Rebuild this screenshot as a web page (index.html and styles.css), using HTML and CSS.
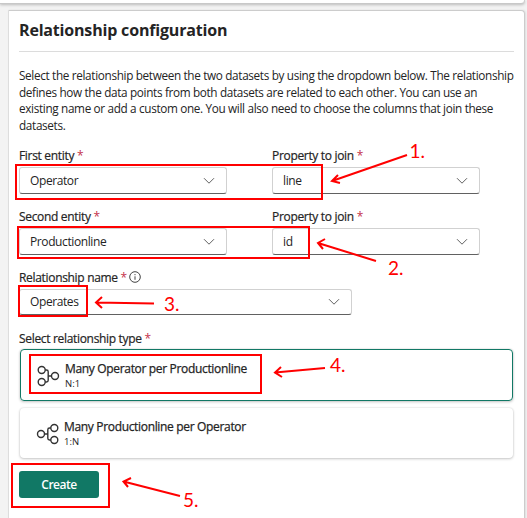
FILE: index.html
```html
<!DOCTYPE html>
<html lang="en">
<head>
<meta charset="utf-8">
<title>Relationship configuration</title>
<link rel="stylesheet" href="styles.css">
</head>
<body>
<div class="previous-panel"></div>
<main class="panel">
  <h1>Relationship configuration</h1>
  <p class="description">
    <span>Select the relationship between the two datasets by using the dropdown below. The relationship</span>
    <span>defines how the data points from both datasets are related to each other. You can use an</span>
    <span>existing name or add a custom one. You will also need to choose the columns that join these</span>
    <span>datasets.</span>
  </p>
  <div class="row">
    <div class="field">
      <div class="label">First entity <i>*</i></div>
      <div class="select"><span>Operator</span><svg class="chevron" viewBox="0 0 12 8"><path d="M1 1.2 6 6.2 11 1.2"/></svg></div>
    </div>
    <div class="field">
      <div class="label">Property to join <i>*</i></div>
      <div class="select"><span>line</span><svg class="chevron" viewBox="0 0 12 8"><path d="M1 1.2 6 6.2 11 1.2"/></svg></div>
    </div>
  </div>
  <div class="row">
    <div class="field">
      <div class="label">Second entity <i>*</i></div>
      <div class="select"><span>Productionline</span><svg class="chevron" viewBox="0 0 12 8"><path d="M1 1.2 6 6.2 11 1.2"/></svg></div>
    </div>
    <div class="field">
      <div class="label">Property to join <i>*</i></div>
      <div class="select"><span>id</span><svg class="chevron" viewBox="0 0 12 8"><path d="M1 1.2 6 6.2 11 1.2"/></svg></div>
    </div>
  </div>
  <div class="field name-field">
    <div class="label">Relationship name <i>*</i><svg class="info" viewBox="0 0 12 12"><circle cx="6" cy="6" r="5.3"/><path d="M6 5.3V8.8M6 3.1V4.2"/></svg></div>
    <div class="select"><span>Operates</span><svg class="chevron" viewBox="0 0 12 8"><path d="M1 1.2 6 6.2 11 1.2"/></svg></div>
  </div>
  <div class="label type-label">Select relationship type <i>*</i></div>
  <div class="card selected">
    <svg class="rel" viewBox="0 0 23 22"><circle cx="4.7" cy="5" r="3.5"/><circle cx="4.7" cy="17" r="3.5"/><circle cx="18" cy="11" r="3.5"/><path d="M8.2 5H9.5Q11.2 5 11.2 6.7V15.3Q11.2 17 9.5 17H8.2M11.2 11H14.5"/></svg>
    <div><div class="name">Many Operator per Productionline</div><div class="ratio">N:1</div></div>
  </div>
  <div class="card">
    <svg class="rel" viewBox="0 0 23 22"><circle cx="18.3" cy="5" r="3.5"/><circle cx="18.3" cy="17" r="3.5"/><circle cx="5" cy="11" r="3.5"/><path d="M14.8 5H13.5Q11.8 5 11.8 6.7V15.3Q11.8 17 13.5 17H14.8M11.8 11H8.5"/></svg>
    <div><div class="name">Many Productionline per Operator</div><div class="ratio">1:N</div></div>
  </div>
  <button class="create">Create</button>
</main>
<svg class="annotations" viewBox="0 0 527 518">
  <path class="box" d="M16 165H322V199H16ZM18 227H309V258H18ZM19 286H87V316H19ZM30 355H261V393H30ZM12 464H109V507H12Z"/>
  <path class="arrow" d="M407 155 332 181M338 175 332 181 340 183"/>
  <path class="arrow" d="M376 261 318 243M325 239 318 243 323 249"/>
  <path class="arrow" d="M154 303.5 96 302.5M102 297 96 302.5 102 308"/>
  <path class="arrow" d="M325 368 275 372.5M281 367 275 372.5 282 377"/>
  <path class="arrow" d="M180 496 123.500 481.500M131 478 123.500 481.500 128 487"/>
  <text x="409.500" y="158">1.</text>
  <text x="388" y="275">2.</text>
  <text x="164" y="311">3.</text>
  <text x="330" y="372">4.</text>
  <text x="183" y="507">5.</text>
</svg>
</body>
</html>
```
FILE: styles.css
```css
* { box-sizing: border-box; }
body {
  margin: 0;
  height: 518px;
  overflow: hidden;
  background: #f3f3f3;
  color: #242424;
  font: 12px/16px "Open Sans", "Noto Sans", sans-serif;
}
.previous-panel {
  width: 525px;
  height: 4px;
  background: #fff;
  border-right: 1px solid #ccc;
  border-bottom: 1px solid #c8c8c8;
  border-radius: 0 0 4px 0;
  box-shadow: 0 1px 3px #bbb;
}
.panel {
  width: 517px;
  height: 520px;
  margin: 6px 0 0 8px;
  padding: 0 10px;
  background: #fff;
  border: 1px solid #ccc;
  border-left-color: #ddd;
  border-radius: 0 4px 0 0;
  box-shadow: 1px 0 2px #ddd;
}
h1 {
  margin: 0 0 15px;
  height: 41px;
  border-bottom: 1px solid #dcdcdc;
  font-size: 16px;
  font-weight: 700;
  line-height: 38px;
  letter-spacing: -0.18px;
  white-space: nowrap;
}
.description { margin: 0 0 15px; font-size: 11.750px; line-height: 16.600px; white-space: nowrap; }
.description span { display: block; letter-spacing: -0.34px; }
.row { display: flex; gap: 45px; height: 61px; }
.field { width: 208px; }
.label {
  display: flex;
  height: 18px;
  line-height: 16px;
  font-weight: 500;
  letter-spacing: -0.32px;
  white-space: pre;
  -webkit-text-stroke: 0.2px #242424;
}
.label i { color: #c4314b; font-style: normal; -webkit-text-stroke: 0; }
.info { width: 12px; height: 12px; margin: 1px 0 0 2px; fill: none; stroke: #424242; }
.select {
  display: flex;
  align-items: center;
  justify-content: space-between;
  height: 27px;
  margin-top: 1px;
  padding: 0 11px 0 10px;
  border: 1px solid #d1d1d1;
  border-bottom-color: #616161;
  border-radius: 3px;
  letter-spacing: -0.4px;
}
.chevron { width: 12px; height: 8px; fill: none; stroke: #616161; }
.name-field { width: 333px; height: 61px; }
.name-field .label { line-height: 15px; }
.name-field .select { height: 26px; }
.type-label { height: 18px; }
.card {
  display: flex;
  height: 50px;
  width: 493px;
  margin: 0 0 13px 1px;
  padding: 11px 0 0 16px;
  gap: 5px;
  border-radius: 4px;
  box-shadow: 0 0 2px rgba(0,0,0,.14), 0 1px 3px rgba(0,0,0,.2);
}
.card.selected { height: 52px; margin-bottom: 7px; border: 1px solid #117865; }
.rel { width: 23px; height: 22px; margin-top: 4px; fill: none; stroke: #333; stroke-width: 1.400; }
.name { font-size: 12px; line-height: 16px; letter-spacing: -.33px; white-space: nowrap; -webkit-text-stroke: .25px #242424; }
.ratio { font-size: 9.500px; line-height: 13px; }
.create {
  display: block;
  width: 80px;
  height: 27px;
  padding: 0;
  border: 0;
  border-radius: 3px;
  background: #117865;
  color: #fff;
  font: 600 12px/27px "Open Sans", sans-serif;
  letter-spacing: -.5px;
}
.annotations { position: absolute; left: 0; top: 0; width: 527px; height: 518px; pointer-events: none; }
.box, .arrow { fill: none; stroke: #f00; stroke-width: 2; }
.annotations text { font: 19px Lato, sans-serif; fill: #f00; }
```
